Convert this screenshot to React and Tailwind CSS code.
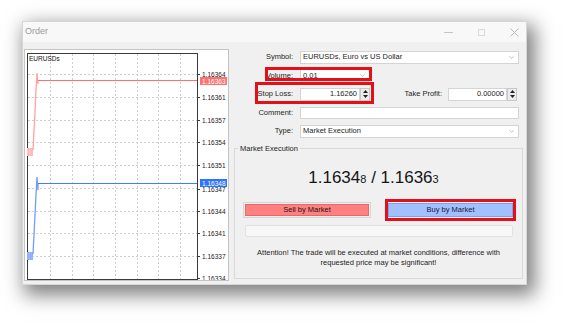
import React from 'react'
import { ChevronDown } from 'lucide-react'

const gridX = [25, 47, 68, 90, 112, 133, 155]
const gridY = [24, 47, 70, 92, 115, 138, 161, 183, 206]
const priceLabels = [
  [24, '1.16364'],
  [47, '1.16361'],
  [70, '1.16357'],
  [92, '1.16354'],
  [115, '1.16351'],
  [139, '1.16347'],
  [161, '1.16344'],
  [183, '1.16341'],
  [206, '1.16337'],
  [228, '1.16334'],
]

function Chart() {
  return (
    <div className="mt-[7px] w-[205px] h-[232px] bg-white border border-[#c4c4c4]">
      <svg width="203" height="230" viewBox="0 0 203 230">
        {gridX.map((x) => (
          <line key={'x' + x} x1={x + 0.5} y1="4" x2={x + 0.5} y2="229" stroke="#cdcdcd" strokeDasharray="2 2" />
        ))}
        {gridY.map((y) => (
          <line key={'y' + y} x1="3" y1={y + 0.5} x2="172" y2={y + 0.5} stroke="#cdcdcd" strokeDasharray="2 2" />
        ))}
        <rect x="2.5" y="3.5" width="170" height="226" fill="none" stroke="#3a3a3a" />
        <text x="4" y="10.5" fontSize="6.5" fill="#111" fontFamily="Liberation Sans, Arial, sans-serif">EURUSDs</text>

        {priceLabels.map(([y, t]) => (
          <g key={t}>
            <line x1="172" y1={y + 0.5} x2="175" y2={y + 0.5} stroke="#3a3a3a" />
            <text x="177" y={y + 2.5} fontSize="6.5" fill="#222" fontFamily="Liberation Sans, Arial, sans-serif">{t}</text>
          </g>
        ))}

        {/* ask line */}
        <rect x="2" y="98" width="6" height="8" fill="#ffbcbc" />
        <polyline points="8,100 9,80 10,62 11,40 12,23 13,34 13,30" fill="none" stroke="#ffa3a3" strokeWidth="1.3" />
        <line x1="13" y1="30.5" x2="172" y2="30.5" stroke="#ff7070" strokeWidth="1.2" />
        <rect x="175" y="27" width="27" height="8" fill="#ff7070" />
        <text x="177" y="33.5" fontSize="6.5" fill="#fff" fontFamily="Liberation Sans, Arial, sans-serif">1.16363</text>

        {/* bid line */}
        <rect x="2" y="202" width="6" height="8" fill="#8fb4ff" />
        <polyline points="8,204 9,185 10,165 11,145 12,127 13,140 13,133" fill="none" stroke="#6f9dff" strokeWidth="1.3" />
        <line x1="13" y1="133.5" x2="172" y2="133.5" stroke="#3f7fff" strokeWidth="1.2" />
        <rect x="175" y="129" width="27" height="8" fill="#2f74ff" />
        <text x="177" y="135.5" fontSize="6.5" fill="#fff" fontFamily="Liberation Sans, Arial, sans-serif">1.16348</text>
      </svg>
    </div>
  )
}

function Spinner() {
  return (
    <div className="w-[10px] h-[13px] bg-[#ececec] border border-[#c8c8c8] flex flex-col items-center justify-center gap-[2px]">
      <svg width="5" height="3" viewBox="0 0 5 3"><polygon points="2.5,0 5,3 0,3" fill="#222" /></svg>
      <svg width="5" height="3" viewBox="0 0 5 3"><polygon points="0,0 5,0 2.5,3" fill="#222" /></svg>
    </div>
  )
}

function SelectBox({ value, width }) {
  return (
    <div className={`${width} h-[13px] bg-white border border-[#d4d4d4] flex items-center justify-between pl-[2px] pr-[3px]`}>
      <span>{value}</span>
      <ChevronDown size={7} strokeWidth={1.6} color="#777" />
    </div>
  )
}

function OrderForm() {
  return (
    <div className="relative ml-[5px] w-[289px] flex flex-col">
      <div className="pt-[5.75px] flex flex-col">
        <div className="h-[18.5px] flex items-center">
          <span className="w-[59px] text-right">Symbol:</span>
          <div className="ml-[7px]">
            <SelectBox value="EURUSDs, Euro vs US Dollar" width="w-[219px]" />
          </div>
        </div>
        <div className="h-[18.5px] flex items-center">
          <span className="w-[59px] text-right">Volume:</span>
          <div className="ml-[7px]">
            <SelectBox value="0.01" width="w-[70px]" />
          </div>
        </div>
        <div className="h-[18.5px] flex items-center">
          <span className="w-[59px] text-right">Stop Loss:</span>
          <div className="ml-[7px] flex">
            <div className="w-[60px] h-[13px] bg-white border border-[#d4d4d4] flex items-center justify-end pr-[2px]">1.16260</div>
            <Spinner />
          </div>
          <span className="w-[72px] text-right">Take Profit:</span>
          <div className="ml-[6px] flex">
            <div className="w-[59px] h-[13px] bg-white border border-[#d4d4d4] flex items-center justify-end pr-[2px]">0.00000</div>
            <Spinner />
          </div>
        </div>
        <div className="h-[18.5px] flex items-center">
          <span className="w-[59px] text-right">Comment:</span>
          <div className="ml-[7px] w-[219px] h-[12px] bg-white border border-[#d4d4d4]" />
        </div>
        <div className="h-[18.5px] flex items-center">
          <span className="w-[59px] text-right">Type:</span>
          <div className="ml-[7px]">
            <SelectBox value="Market Execution" width="w-[219px]" />
          </div>
        </div>
      </div>

      <fieldset className="mt-[4px] w-[289px] h-[135px] border border-[#d9d9d9] flex flex-col">
        <legend className="ml-[3px] px-[2px] leading-[9px]">Market Execution</legend>
        <div className="mt-[14.5px] h-[20px] leading-[20px] text-center pr-[10px] text-[17px] text-[#151515]">
          1.1634<span className="text-[11px]">8</span> / 1.1636<span className="text-[11px]">3</span>
        </div>
        <div className="mt-[11px] h-[22px] flex items-center">
          <div className="ml-[8px] w-[128px] h-[16px] border border-[#d6d6d6] p-[1px]">
            <div className="w-full h-full bg-[#ff8080] border border-[#e26a6a] flex items-center justify-center text-[#2a1010]">Sell by Market</div>
          </div>
          <div className="ml-[14px] w-[131px] h-[22px] border-[3px] border-[#e3101a] flex items-center justify-center">
            <div className="w-[125px] h-[14px] bg-[#a2c0ff] border border-[#7fa2e6] flex items-center justify-center text-[#16163a]">Buy by Market</div>
          </div>
        </div>
        <div className="mt-[4px] ml-[10px] w-[268px] h-[12px] bg-[#f7f7f7] border border-[#e2e2e2] rounded-[2px]" />
        <div className="mt-[11px] leading-[10px] text-center text-[#1e1e1e]">
          Attention! The trade will be executed at market conditions, difference with
          <br />
          requested price may be significant!
        </div>
      </fieldset>

      {/* highlight boxes */}
      <div className="absolute left-[31px] top-[25px] w-[107px] h-[14px] border-[3px] border-[#e3101a]" />
      <div className="absolute left-[21px] top-[40px] w-[119px] h-[22px] border-[3px] border-[#e3101a]" />
    </div>
  )
}

export default function App() {
  return (
    <div className="w-[569px] h-[327px] bg-white overflow-hidden pt-[21px] pl-[22px] font-['Liberation_Sans',Arial,sans-serif] text-[7.5px] text-[#1e1e1e]">
      <div className="w-[505px] h-[264px] bg-[#f0f0f0] border border-[#d6d6d6] shadow-[5px_7px_18px_3px_rgba(0,0,0,0.5)] flex flex-col">
        <div className="h-[20px] bg-[#f8f8f8] flex items-center pl-[2px]">
          <span className="text-[9px] text-[#9a9a9a]">Order</span>
          <div className="ml-auto flex items-center pr-[7px]">
            <svg width="9" height="9" viewBox="0 0 9 9"><line x1="0" y1="4.5" x2="9" y2="4.5" stroke="#c4c4c4" /></svg>
            <svg className="ml-[25px]" width="7" height="7" viewBox="0 0 7 7"><rect x="0.5" y="0.5" width="6" height="6" fill="none" stroke="#dadada" /></svg>
            <svg className="ml-[25px]" width="9" height="9" viewBox="0 0 9 9"><path d="M0.5 0.5 L8.5 8.5 M8.5 0.5 L0.5 8.5" stroke="#b8b8b8" /></svg>
          </div>
        </div>
        <div className="flex items-start pl-[1px]">
          <Chart />
          <OrderForm />
        </div>
      </div>
    </div>
  )
}
